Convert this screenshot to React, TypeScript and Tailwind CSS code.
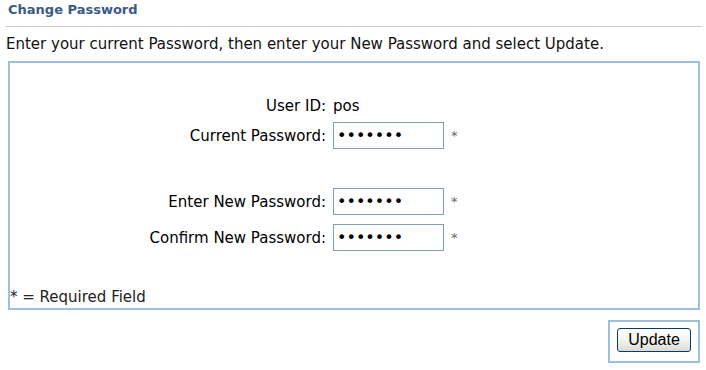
import React from "react";

const FIELDS = [
  { label: "Current Password:", gapTop: "mt-[7px]" },
  { label: "Enter New Password:", gapTop: "mt-[39px]" },
  { label: "Confirm New Password:", gapTop: "mt-[9px]" },
];

function PasswordRow({ label, gapTop }: { label: string; gapTop: string }) {
  return (
    <div className={`grid grid-cols-[316px_111px_auto] gap-x-[7px] items-center h-[27px] ${gapTop}`}>
      <label className="text-right whitespace-nowrap">{label}</label>
      <input
        type="password"
        defaultValue="1234567"
        className="w-[111px] h-[27px] border border-[#7f9db9] px-[3px] text-[16px] outline-none bg-white"
      />
      <span className="text-[#666] text-[13px]">*</span>
    </div>
  );
}

export default function App() {
  return (
    <div className="w-[706px] h-[370px] bg-white text-black text-[15px] leading-[18px] font-['DejaVu_Sans',Verdana,sans-serif] overflow-hidden">
      {/* header */}
      <div className="h-[26px] pl-[8px] pt-[2px] text-[13px] leading-[16px] font-bold text-[#3a5a87]">Change Password</div>
      <div className="ml-[5px] mr-[4px] h-px bg-[#cccccc]" />

      <p className="pl-[6px] mt-[8px] h-[18px] whitespace-nowrap text-[#111]">
        Enter your current Password, then enter your New Password and select Update.
      </p>

      {/* form box */}
      <div className="mt-[8px] ml-[8px] w-[692px] h-[249px] border-2 border-[#9dbfdd] flex flex-col">
        <div className="pt-[34px]">
          <div className="grid grid-cols-[316px_auto] gap-x-[7px] h-[18px]">
            <span className="text-right">User ID:</span>
            <span>pos</span>
          </div>
          <div>
            {FIELDS.map((f) => (
              <PasswordRow key={f.label} label={f.label} gapTop={f.gapTop} />
            ))}
          </div>
        </div>
        <div className="flex-1" />
        <div className="pb-[2px] h-[20px] text-[#222] whitespace-nowrap">* = Required Field</div>
      </div>

      {/* action */}
      <div className="flex justify-end pr-[6px] mt-[10px]">
        <div className="w-[92px] h-[43px] border-2 border-[#9dbfdd] pl-[7px] pt-[6px]">
          <button
            type="button"
            className="w-[74px] h-[24px] rounded-[3px] border border-[#003c74] bg-gradient-to-b from-white via-[#f4f4f0] to-[#dcdad0] text-[16px] leading-[18px] text-black font-['Liberation_Sans',Arial,sans-serif]"
          >
            Update
          </button>
        </div>
      </div>
    </div>
  );
}
